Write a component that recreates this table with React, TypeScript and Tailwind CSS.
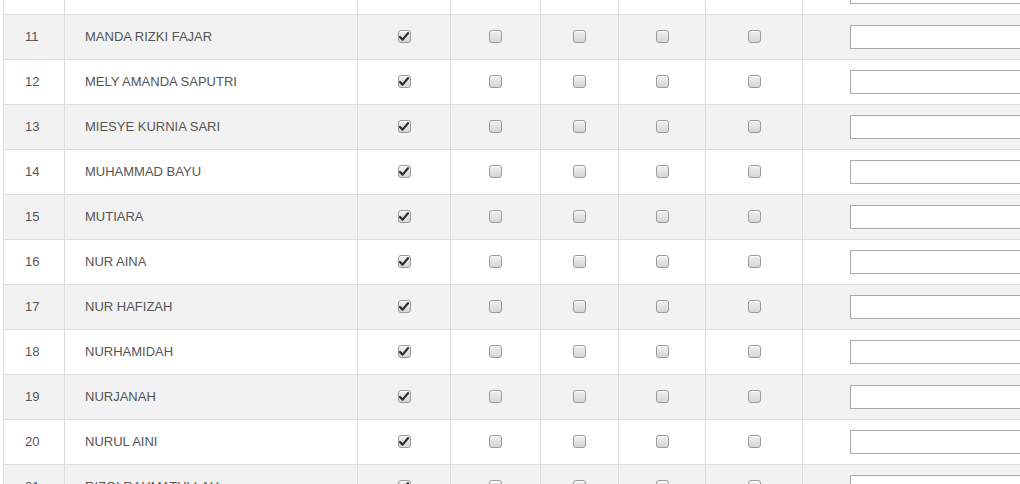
import React from "react";

interface Siswa {
  no: number | null;
  nama: string;
  hadir: boolean;
}

// baris pertama cuma kelihatan bagian bawahnya (sudah di-scroll)
const data: Siswa[] = [
  { no: null, nama: "", hadir: true },
  { no: 11, nama: "MANDA RIZKI FAJAR", hadir: true },
  { no: 12, nama: "MELY AMANDA SAPUTRI", hadir: true },
  { no: 13, nama: "MIESYE KURNIA SARI", hadir: true },
  { no: 14, nama: "MUHAMMAD BAYU", hadir: true },
  { no: 15, nama: "MUTIARA", hadir: true },
  { no: 16, nama: "NUR AINA", hadir: true },
  { no: 17, nama: "NUR HAFIZAH", hadir: true },
  { no: 18, nama: "NURHAMIDAH", hadir: true },
  { no: 19, nama: "NURJANAH", hadir: true },
  { no: 20, nama: "NURUL AINI", hadir: true },
  { no: 21, nama: "RIZQI RAHMATULLAH", hadir: true },
];

const Check = ({ checked }: { checked: boolean }) => {
  return (
    <span className="inline-flex items-center justify-center w-[13px] h-[13px] rounded-[3px] border border-[#9a9a9a] bg-gradient-to-b from-[#f0f0f0] to-[#d6d6d6] shadow-[inset_0_1px_0_#fff]">
      {checked && (
        <svg width="10" height="9" viewBox="0 0 10 9">
          <path d="M1 5 L3.6 7.6 L9 1.2" fill="none" stroke="#2e2e2e" strokeWidth="2.2" strokeLinecap="round" strokeLinejoin="round" />
        </svg>
      )}
    </span>
  );
};

const App = () => {
  return (
    <div className="w-[1020px] h-[484px] overflow-hidden bg-white font-['Liberation_Sans',Arial,sans-serif] text-[13px] text-[#555]">
      <div className="ml-[3px] mt-[-31px] w-[1200px] border-l border-[#ddd]">
        {data.map((s, i) => (
          <div
            key={i}
            className={`flex h-[45px] border-t border-[#ddd] ${i % 2 === 1 ? "bg-[#f2f2f2]" : "bg-white"}`}
          >
            <div className="w-[61px] flex items-center pl-[21px] pb-[1px] border-r border-[#ddd]">{s.no}</div>
            <div className="w-[293px] flex items-center pl-[20px] pb-[1px] border-r border-[#ddd]">{s.nama}</div>
            <div className="w-[93px] flex items-center justify-center pb-[1px] border-r border-[#ddd]">
              {s.no && <Check checked={s.hadir} />}
            </div>
            <div className="w-[90px] flex items-center justify-center pb-[1px] border-r border-[#ddd]">
              {s.no && <Check checked={false} />}
            </div>
            <div className="w-[78px] flex items-center justify-center pb-[1px] border-r border-[#ddd]">
              {s.no && <Check checked={false} />}
            </div>
            <div className="w-[87px] flex items-center justify-center pb-[1px] border-r border-[#ddd]">
              {s.no && <Check checked={false} />}
            </div>
            <div className="w-[97px] flex items-center justify-center pb-[1px] border-r border-[#ddd]">
              {s.no && <Check checked={false} />}
            </div>
            <div className="flex-1 flex items-center pl-[47px]">
              <input type="text" className="w-[300px] h-[24px] bg-white border border-[#a9a9a9] outline-none" />
            </div>
          </div>
        ))}
      </div>
    </div>
  );
};

export default App;
